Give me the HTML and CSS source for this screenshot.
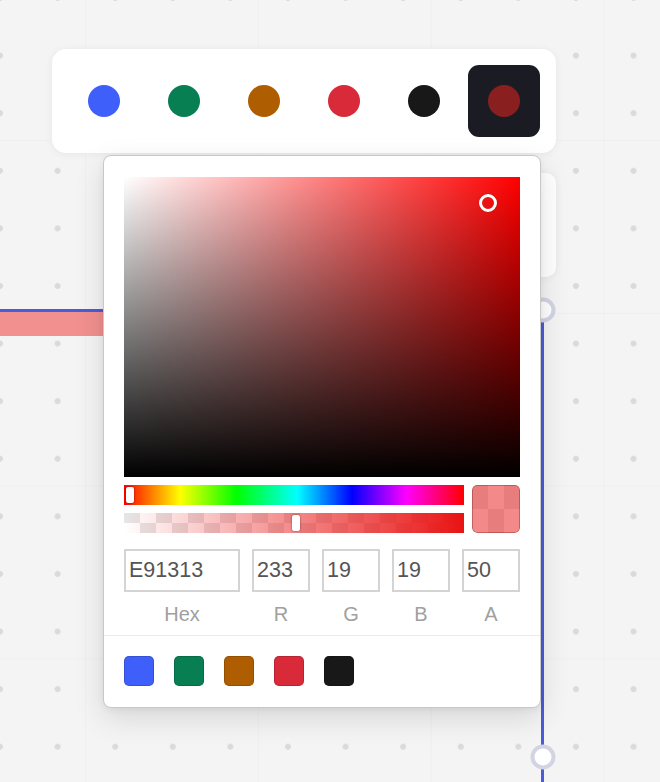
FILE: index.html
```html
<!DOCTYPE html>
<html lang="en">
<head>
    <meta charset="UTF-8" />
    <title>Stroke colour</title>
    <meta name="viewport" content="width=device-width, initial-scale=1" />
    <link rel="stylesheet" href="styles.css">
</head>
<body>
    <!-- Canvas: the selected shape and its handles -->
    <div class="canvas">
        <div class="shape-fill"></div>
        <div class="sel-line sel-top"></div>
        <div class="sel-line sel-right"></div>
        <div class="handle handle-top"></div>
        <div class="handle handle-bottom"></div>
    </div>

    <div class="tools">
        <!-- Stroke colour toolbar -->
        <div class="toolbar">
            <button class="tool"><span class="dot blue"></span></button>
            <button class="tool"><span class="dot green"></span></button>
            <button class="tool"><span class="dot orange"></span></button>
            <button class="tool"><span class="dot red"></span></button>
            <button class="tool"><span class="dot black"></span></button>
            <button class="tool active"><span class="dot picked"></span></button>
        </div>
        <div class="side-panel"></div>

        <!-- Colour picker popover -->
        <div class="picker">
            <div class="sat">
                <span class="sat-cursor"></span>
            </div>
            <div class="sliders">
                <div class="hue"><span class="thumb thumb-hue"></span></div>
                <div class="preview"><span class="preview-color"></span></div>
                <div class="alpha"><span class="thumb thumb-alpha"></span></div>
            </div>
            <div class="fields">
                <label class="field"><input value="E91313"><span>Hex</span></label>
                <label class="field"><input value="233"><span>R</span></label>
                <label class="field"><input value="19"><span>G</span></label>
                <label class="field"><input value="19"><span>B</span></label>
                <label class="field"><input value="50"><span>A</span></label>
            </div>
            <div class="presets">
                <button class="preset blue"></button>
                <button class="preset green"></button>
                <button class="preset orange"></button>
                <button class="preset red"></button>
                <button class="preset black"></button>
            </div>
        </div>
    </div>
</body>
</html>
```

FILE: styles.css
```css
html, body {
    height: 100%;
    margin: 0;
    padding: 0;
    overflow: hidden;
}
body {
    position: relative;
    font-family: 'Liberation Sans', Arial, sans-serif;
    background-color: #f4f4f4;
    background-image:
        radial-gradient(circle at center, #dadada 0 2.6px, rgba(218,218,218,0) 3.3px),
        linear-gradient(to right, rgba(0,0,0,0.018) 1px, transparent 1px),
        linear-gradient(to bottom, rgba(0,0,0,0.018) 1px, transparent 1px);
    background-size: 57.6px 57.6px, 172.8px 100%, 100% 172.8px;
    background-position: -28.8px -30.8px, 85px 0, 0 140px;
}
button {
    border: none;
    padding: 0;
    cursor: pointer;
}

/* Canvas shapes */
.canvas {
    position: absolute;
    inset: 0;
}
.shape-fill {
    position: absolute;
    left: 0; top: 312px;
    width: 541px; height: 24px;
    background: #f1908e;
}
.sel-line {
    position: absolute;
    background: #4b5cd8;
}
.sel-top {
    left: 0; top: 309px;
    width: 544px; height: 3px;
}
.sel-right {
    left: 541px; top: 310px;
    width: 3px; height: 480px;
}
.handle {
    position: absolute;
    width: 17px; height: 17px;
    border: 4px solid #d3d4e3;
    border-radius: 50%;
    background: #fff;
    transform: translate(-50%, -50%);
}
.handle-top { left: 542.5px; top: 310px; }
.handle-bottom { left: 542.5px; top: 757px; }

/* Toolbar */
.tools {
    position: relative;
    width: 504px;
    margin: 49px 0 0 52px;
    display: flex;
    flex-direction: column;
    align-items: flex-end;
}
.toolbar {
    display: flex;
    gap: 8px;
    padding: 16px;
    background: #fff;
    border-radius: 14px;
    box-shadow: 0 1px 8px rgba(0,0,0,0.06);
}
.tool {
    width: 72px; height: 72px;
    display: flex;
    align-items: center;
    justify-content: center;
    border-radius: 11px;
    background: transparent;
}
.tool.active {
    background: #1b1b23;
}
.dot {
    width: 32px; height: 32px;
    border-radius: 50%;
}
.blue { background: #3f5ffb; }
.green { background: #087f52; }
.orange { background: #ae5e00; }
.red { background: #d92a3a; }
.black { background: #181818; }
.dot.picked { background: #8a1f20; }
.side-panel {
    width: 160px; height: 104px;
    margin-top: 20px;
    background: #fff;
    border-radius: 10px;
    box-shadow: 0 1px 8px rgba(0,0,0,0.06);
}

/* Colour picker */
.picker {
    position: absolute;
    top: 106px; left: 51px;
    width: 396px;
    padding: 21px 20px 21px;
    background: #fff;
    border: 1px solid #c8c8c8;
    border-radius: 8px;
    box-shadow: 0 10px 30px rgba(0,0,0,0.12), 0 2px 6px rgba(0,0,0,0.06);
}
.sat {
    position: relative;
    height: 300px;
    background:
        linear-gradient(to top, #000, rgba(0,0,0,0)),
        linear-gradient(to right, #fff, rgba(255,255,255,0)),
        #ff0000;
}
.sat-cursor {
    position: absolute;
    left: 91.8%; top: 8.6%;
    width: 12px; height: 12px;
    border: 3px solid #fff;
    border-radius: 50%;
    transform: translate(-50%, -50%);
    box-shadow: 0 0 1px rgba(0,0,0,0.5);
}
.sliders {
    display: grid;
    grid-template-columns: 1fr 48px;
    grid-template-rows: 20px 20px;
    gap: 8px;
    margin-top: 8px;
}
.hue, .alpha {
    position: relative;
    grid-column: 1;
}
.hue {
    grid-row: 1;
    background: linear-gradient(to right, #f00 0%, #ff0 16.5%, #0f0 33%, #0ff 51%, #00f 67%, #f0f 83%, #f00 100%);
}
.alpha {
    grid-row: 2;
    background:
        linear-gradient(to right, rgba(233,19,19,0), rgba(233,19,19,1)),
        conic-gradient(#fff 25%, #e6e6e6 0 50%, #fff 0 75%, #e6e6e6 0);
    background-size: 100% 100%, 32px 20px;
}
.thumb {
    position: absolute;
    top: 2px;
    width: 8px; height: 16px;
    background: #fff;
    border-radius: 2px;
    box-shadow: 0 0 2px rgba(0,0,0,0.55);
}
.thumb-hue { left: 2px; }
.thumb-alpha { left: 168px; }
.preview {
    grid-column: 2;
    grid-row: 1 / 3;
    border-radius: 5px;
    overflow: hidden;
    background: conic-gradient(#fff 25%, #e6e6e6 0 50%, #fff 0 75%, #e6e6e6 0);
    background-size: 32px 48px;
}
.preview-color {
    display: block;
    height: 100%;
    box-sizing: border-box;
    border: 1px solid rgba(120,20,20,0.35);
    border-radius: 5px;
    background: rgba(233,19,19,0.5);
}
.fields {
    display: grid;
    grid-template-columns: 2fr 1fr 1fr 1fr 1fr;
    gap: 12px;
    margin-top: 16px;
}
.field {
    display: flex;
    flex-direction: column;
    align-items: center;
}
.field input {
    width: 100%;
    height: 43px;
    box-sizing: border-box;
    border: 2px solid #d4d4d4;
    padding: 0 3px;
    font-family: 'Liberation Sans', Arial, sans-serif;
    font-size: 21.5px;
    color: #555;
    background: #fff;
    outline: none;
}
.field span {
    margin-top: 10px;
    font-size: 20px;
    line-height: 24px;
    color: #a0a0a0;
}
.presets {
    display: flex;
    gap: 20px;
    margin: 9px -20px 0;
    padding: 20px 20px 0;
    border-top: 1px solid #ebebeb;
}
.preset {
    width: 30px; height: 30px;
    border-radius: 5px;
    box-shadow: inset 0 0 0 1px rgba(0,0,0,0.15);
}
```
